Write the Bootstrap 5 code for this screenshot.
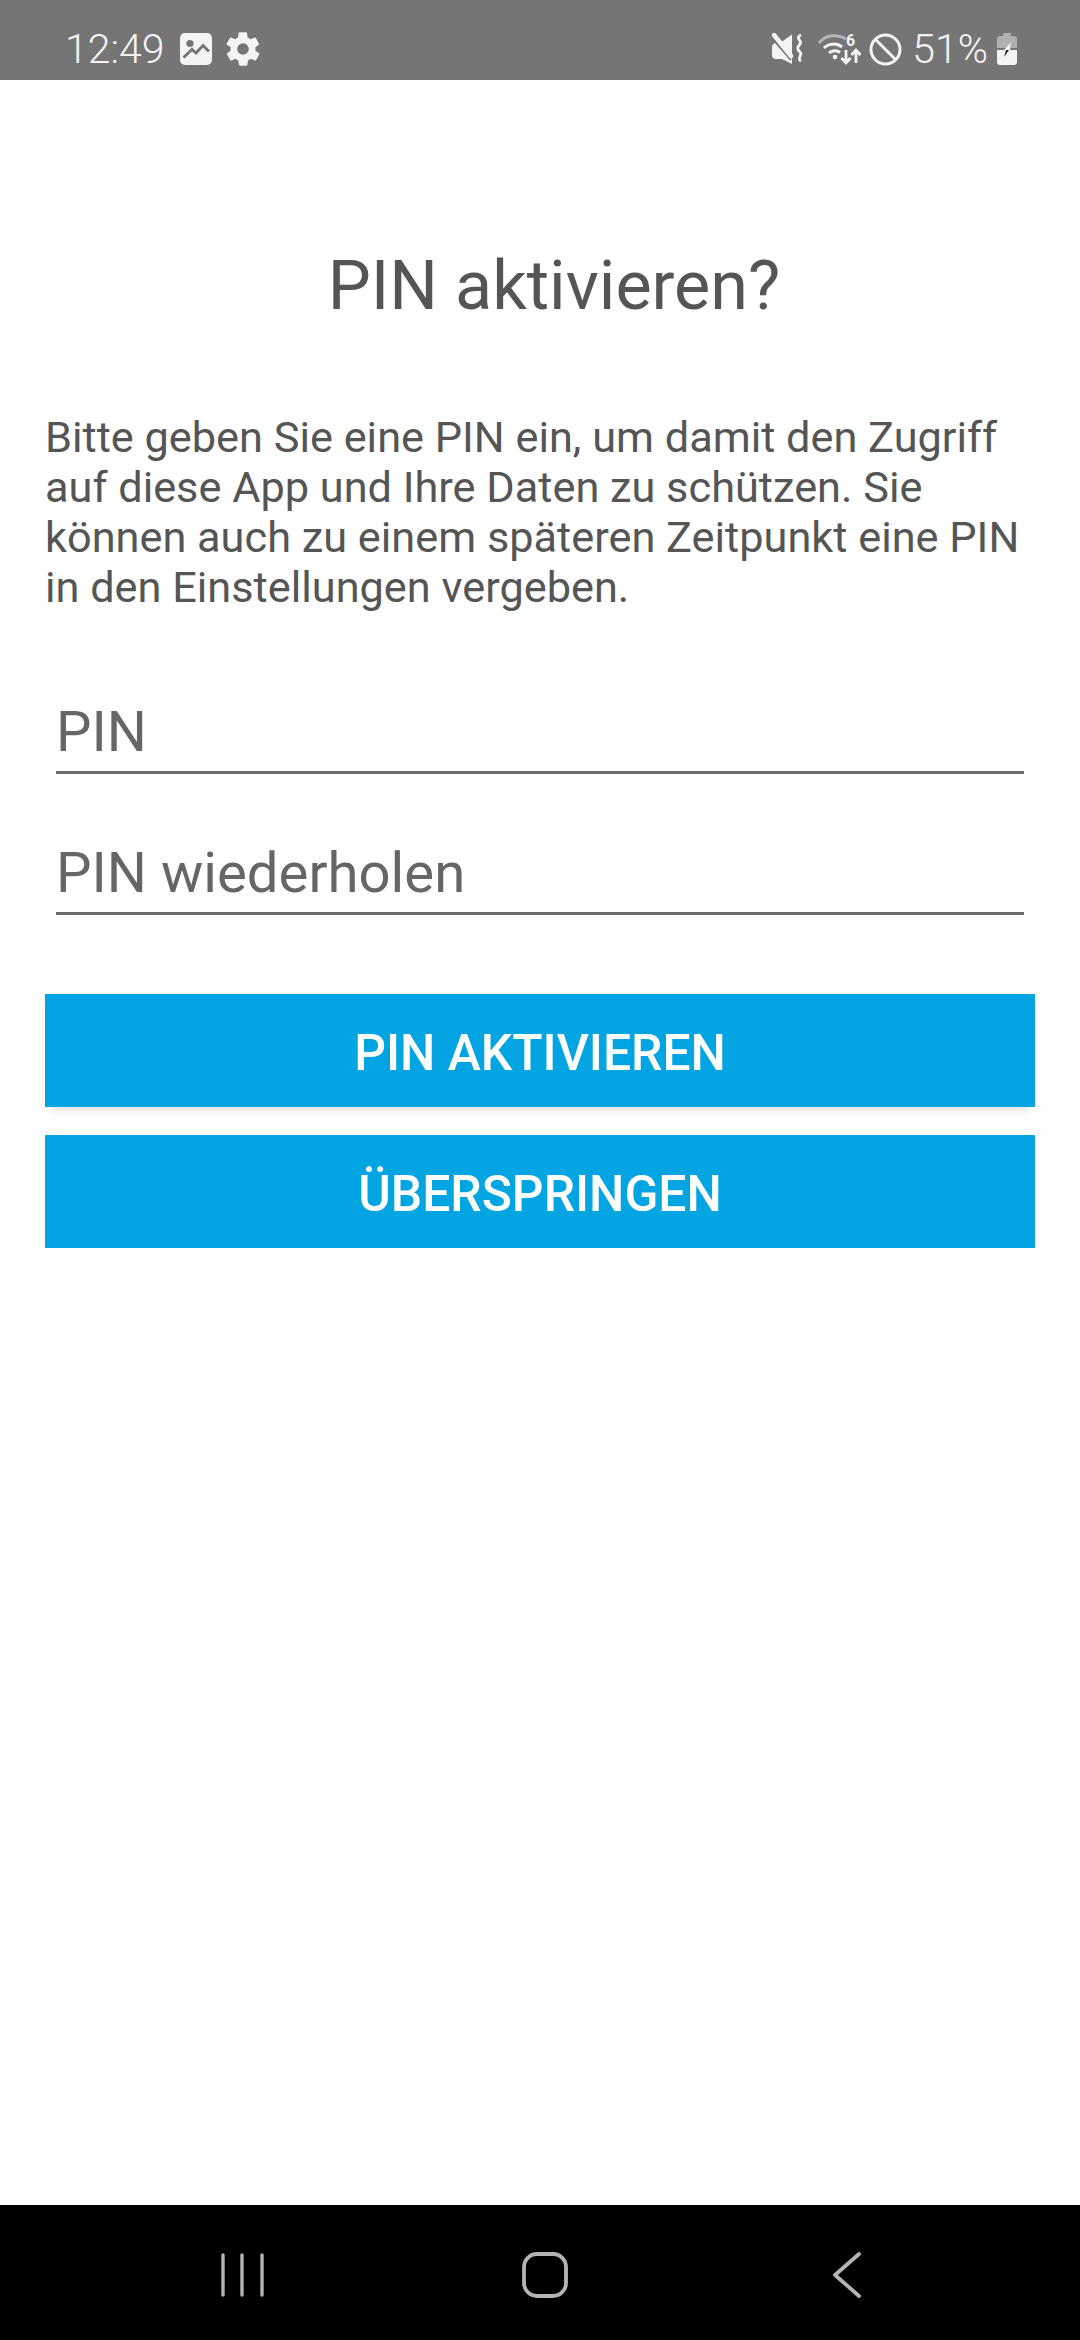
<!DOCTYPE html>
<html lang="de">
<head>
<meta charset="utf-8">
<title>PIN aktivieren?</title>
<link href="https://cdn.jsdelivr.net/npm/bootstrap@5.3.0/dist/css/bootstrap.min.css" rel="stylesheet">
<style>
html,body{height:2340px;overflow:hidden}
body{font-family:Roboto,"Liberation Sans",sans-serif;background:#fff;color:#535353}
.shell{height:2340px}
.statusbar{height:80px;background:#757575;color:#f4f4f4;padding:18px 62px 0 65px;font-size:41px;font-weight:300;line-height:1}
.statusbar svg{display:block;flex:none}
.clock{width:115px}
.gap-gear{margin-left:11px}
.gap-wifi{margin-left:15px}
.gap-block{margin-left:5px}
.pct{margin-left:10px}
.gap-batt{margin-left:8px}
.main-area{padding:0 45px}
.screen-title{font-size:68.3px;font-weight:400;line-height:78px;margin:167px 0 0;padding-left:28px;text-align:center;color:#555}
.intro{font-size:43.3px;line-height:50px;margin:88px 0 0;color:#555}
.fields{padding:0 11px;margin-top:87px}
.pin-input{display:block;width:100%;height:74px;border:0;border-bottom:3px solid #6b6b6b;border-radius:0;padding:0 0 8px;font-size:56.300px;line-height:64px;background:transparent;color:#535353;font-family:inherit;box-shadow:none}
.pin-input::placeholder{color:#666;opacity:1}
.field-gap{margin-top:67px}
.stack-top{margin-top:79px}
.act-btn{display:block;width:100%;height:113px;border:0;border-radius:0;padding:6px 0 0;background:#02a5e2;color:#fff;font-size:49.800px;font-weight:500;font-family:inherit;text-transform:uppercase}
.act-btn:hover,.act-btn:focus{background:#02a5e2;color:#fff}
.lift{box-shadow:0 9px 8px -6px rgba(0,0,0,.13)}
.next-btn{margin-top:28px}
.navbar-sys{height:135px;background:#000;padding:47px 0 0 220px}
.nav-home{margin-left:255px}
.nav-back{margin-left:261px}
</style>
</head>
<body>
<div class="shell d-flex flex-column">
  <div class="statusbar d-flex align-items-center justify-content-between flex-shrink-0">
    <div class="d-flex align-items-center">
      <span class="clock">12:49</span>
      <svg width="32" height="32" viewBox="0 0 32 32"><rect width="32" height="32" rx="5" fill="#f4f4f4"/><circle cx="10" cy="10.500" r="3.600" fill="#757575"/><path d="M3.500 24.500 L12 16.500 L16 20 L23 12.500 L29 18.500" fill="none" stroke="#757575" stroke-width="2.800"/></svg>
      <svg class="gap-gear" width="40" height="40" viewBox="0 0 24 24"><path fill="#f4f4f4" fill-rule="evenodd" d="M19.400 13c.1-.3.1-.7.1-1s0-.7-.1-1l2.100-1.600c.2-.2.2-.4.1-.6l-2-3.500c-.1-.2-.4-.3-.6-.2l-2.500 1c-.5-.4-1.100-.7-1.700-1l-.4-2.600c0-.3-.2-.5-.5-.5h-4c-.3 0-.5.2-.5.5l-.4 2.600c-.6.3-1.200.6-1.700 1l-2.500-1c-.2-.1-.5 0-.6.2l-2 3.500c-.1.2-.1.4.1.6L4.600 11c-.1.3-.1.7-.1 1s0 .7.1 1l-2.100 1.600c-.2.2-.2.4-.1.6l2 3.500c.1.2.4.3.6.2l2.500-1c.5.4 1.100.7 1.700 1l.4 2.600c0 .3.2.5.5.5h4c.3 0 .5-.2.5-.5l.4-2.600c.6-.3 1.200-.6 1.700-1l2.500 1c.2.1.5 0 .6-.2l2-3.500c.1-.2.1-.4-.1-.6zM12 15.500a3.500 3.500 0 1 1 0-7 3.500 3.500 0 0 1 0 7z"/></svg>
    </div>
    <div class="d-flex align-items-center">
      <svg width="31" height="32" viewBox="0 0 31 32"><path fill="#f4f4f4" d="M0 14.500Q0 10 4 10h4L20 1.500V31L10 26H4q-4 0-4-4z"/><path d="M0 5 L19 27" stroke="#757575" stroke-width="2"/><path d="M2 2 L19 23" stroke="#f4f4f4" stroke-width="4.500" stroke-linecap="round"/><path d="M28 2.500c-5 3.500 3 5 0 8.500s-3 5 0 8-2.500 5 0 8.500" fill="none" stroke="#f4f4f4" stroke-width="2.800" stroke-linecap="round"/></svg>
      <svg class="gap-wifi" width="46" height="34" viewBox="0 0 46 34"><path d="M1 11C8 2 20 2 28 7" fill="none" stroke="#b5b5b5" stroke-width="3"/><path d="M6 16c5-5 13-5 18-1" fill="none" stroke="#f4f4f4" stroke-width="3"/><path d="M11 21c3-3 8-3 11-.5" fill="none" stroke="#f4f4f4" stroke-width="3"/><circle cx="17" cy="25" r="2.300" fill="#f4f4f4"/><text x="28" y="14" font-size="16" font-weight="700" fill="#f4f4f4" font-family="Roboto">6</text><path d="M28 18v13M23.500 26l4.500 5 4.500-5M38 31V18M33.500 23l4.500-5 4.500 5" fill="none" stroke="#f4f4f4" stroke-width="2.800"/></svg>
      <svg class="gap-block" width="33" height="33" viewBox="0 0 33 33"><circle cx="16.500" cy="16.500" r="14.500" fill="none" stroke="#f4f4f4" stroke-width="3"/><path d="M6.500 6.500l20 20" stroke="#f4f4f4" stroke-width="3"/></svg>
      <span class="pct">51%</span>
      <svg class="gap-batt" width="22" height="32" viewBox="0 0 22 32"><path d="M7 0h8v3h3a3 3 0 0 1 3 3v9H1V6a3 3 0 0 1 3-3h3z" fill="#b0b0b0"/><path d="M1 17h20v12a3 3 0 0 1-3 3H4a3 3 0 0 1-3-3z" fill="#f4f4f4"/><path d="M15 9l-7 8h6z" fill="#f4f4f4"/><path d="M13 17l-5 7 2-7z" fill="#222"/></svg>
    </div>
  </div>
  <main class="main-area flex-grow-1">
    <h1 class="screen-title">PIN aktivieren?</h1>
    <p class="intro">Bitte geben Sie eine PIN ein, um damit den Zugriff auf diese App und Ihre Daten zu schützen. Sie können auch zu einem späteren Zeitpunkt eine PIN in den Einstellungen vergeben.</p>
    <div class="fields">
      <input class="pin-input" type="password" placeholder="PIN" aria-label="PIN">
      <input class="pin-input field-gap" type="password" placeholder="PIN wiederholen" aria-label="PIN wiederholen">
    </div>
    <div class="stack-top d-flex flex-column">
      <button class="btn act-btn lift" type="button">PIN aktivieren</button>
      <button class="btn act-btn next-btn" type="button">Überspringen</button>
    </div>
  </main>
  <div class="navbar-sys d-flex align-items-start flex-shrink-0">
    <svg width="46" height="46" viewBox="0 0 46 46"><path d="M3 3v40M22 3v40M42 3v40" stroke="#b4b4b4" stroke-width="3.400" stroke-linecap="round" fill="none"/></svg>
    <svg class="nav-home" width="48" height="46" viewBox="0 0 48 46"><rect x="3" y="2" width="42" height="42" rx="13" fill="none" stroke="#b4b4b4" stroke-width="3.800"/></svg>
    <svg class="nav-back" width="34" height="46" viewBox="0 0 34 46"><path d="M29 2L5 23l24 21" fill="none" stroke="#b4b4b4" stroke-width="3.800" stroke-linecap="round" stroke-linejoin="round"/></svg>
  </div>
</div>
<script src="https://cdn.jsdelivr.net/npm/bootstrap@5.3.0/dist/js/bootstrap.bundle.min.js"></script>
</body>
</html>
